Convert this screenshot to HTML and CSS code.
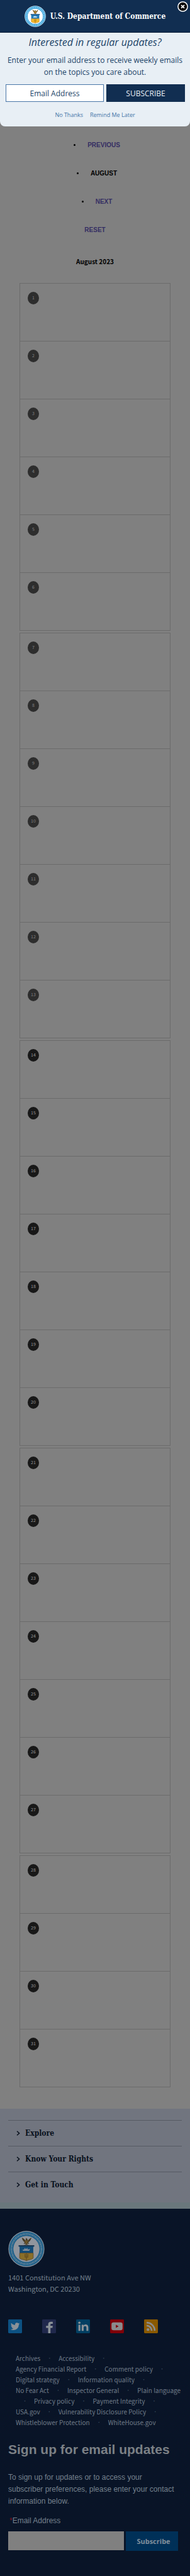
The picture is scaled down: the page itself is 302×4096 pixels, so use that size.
FILE: index.html
```html
<!DOCTYPE html>
<html lang="en">
<head>
<meta charset="utf-8">
<meta name="viewport" content="width=device-width, initial-scale=1">
<title>August 2023 | U.S. Department of Commerce</title>
<link rel="stylesheet" href="styles.css">
</head>
<body>
<svg class="defs" width="0" height="0" aria-hidden="true">
  <symbol id="seal" viewBox="0 0 80 80">
    <circle cx="40" cy="40" r="39.5" fill="#e6f4fb"/>
    <circle cx="40" cy="40" r="33" fill="none" stroke="#2f9fdc" stroke-width="9.5"/>
    <circle cx="40" cy="40" r="33" fill="none" stroke="#b5e0f5" stroke-width="4" stroke-dasharray="1.6 1.3 2.2 1.5"/>
    <circle cx="40" cy="40" r="28.4" fill="#fff"/>
    <path d="M30 15c1 5 3 8 6 10l-2 4 4-1v2l-4 1h12l-4-1v-2l4 1-2-4c4-2 6-6 7-10-4 2-6 4-8 7l-1-4-3-2-1 6c-2-4-5-6-8-7z" fill="#7a5a22"/>
    <path d="M36 24l4-4 4 4-4 6z" fill="#b98a2c"/>
    <path d="M23 32h34v3h-2v14H25V35h-2z" fill="#1b78b8"/>
    <path d="M23 32h34v2H23z" fill="#23405e"/>
    <path d="M31 42l4-1 1-3 3 2 3-2 1 3 5-1-2 4H33z" fill="#dceaf3"/>
    <path d="M25 49h30v11c-3 4-11 3-15 6-4-3-12-2-15-6z" fill="#f4b82a" stroke="#8a6a2a" stroke-width="1"/>
    <path d="M40 49v15M37 51v7h6v-7" fill="none" stroke="#a2731b" stroke-width="1.5"/>
  </symbol>
</svg>

<section class="signup" aria-label="Email signup">
  <header class="brand">
    <svg class="brand-seal"><use href="#seal"/></svg>
    <span class="brand-name">U.S. Department of Commerce</span>
    <button class="close" type="button" aria-label="Close">
      <svg viewBox="0 0 18 18"><circle cx="9" cy="9" r="8" fill="#000" stroke="#fff" stroke-width="1.6"/><path d="M6.4 6.4l5.2 5.2M11.6 6.4l-5.2 5.2" stroke="#fff" stroke-width="2"/></svg>
    </button>
  </header>
  <h2 class="signup-title">Interested in regular updates?</h2>
  <p class="signup-text">Enter your email address to receive weekly emails on the topics you care about.</p>
  <form class="signup-form">
    <input class="signup-input" type="email" aria-label="Email Address" placeholder="Email Address">
    <button class="signup-button" type="button">SUBSCRIBE</button>
  </form>
  <p class="signup-links"><a href="#">No Thanks</a><a href="#">Remind Me Later</a></p>
</section>

<main class="main">
  <ul class="pager">
    <li><a href="#">PREVIOUS</a></li>
    <li><strong>AUGUST</strong></li>
    <li><a href="#">NEXT</a></li>
  </ul>
  <p class="reset"><a href="#">RESET</a></p>
  <h1 class="month">August 2023</h1>
  <div class="calendar">
    <ol class="week past">
      <li><time>1</time></li><li><time>2</time></li><li><time>3</time></li><li><time>4</time></li><li><time>5</time></li><li><time>6</time></li>
    </ol>
    <ol class="week past">
      <li><time>7</time></li><li><time>8</time></li><li><time>9</time></li><li><time>10</time></li><li><time>11</time></li><li><time>12</time></li><li><time>13</time></li>
    </ol>
    <ol class="week">
      <li><time>14</time></li><li><time>15</time></li><li><time>16</time></li><li><time>17</time></li><li><time>18</time></li><li><time>19</time></li><li><time>20</time></li>
    </ol>
    <ol class="week">
      <li><time>21</time></li><li><time>22</time></li><li><time>23</time></li><li><time>24</time></li><li><time>25</time></li><li><time>26</time></li><li><time>27</time></li>
    </ol>
    <ol class="week">
      <li><time>28</time></li><li><time>29</time></li><li><time>30</time></li><li><time>31</time></li>
    </ol>
  </div>
</main>

<nav class="sections" aria-label="Sections">
  <button type="button"><svg viewBox="0 0 6 8"><path d="M1 .8L4.6 4 1 7.2"/></svg>Explore</button>
  <button type="button"><svg viewBox="0 0 6 8"><path d="M1 .8L4.6 4 1 7.2"/></svg>Know Your Rights</button>
  <button type="button"><svg viewBox="0 0 6 8"><path d="M1 .8L4.6 4 1 7.2"/></svg>Get in Touch</button>
</nav>

<footer class="footer">
  <svg class="footer-seal"><use href="#seal"/></svg>
  <address>1401 Constitution Ave NW<br>Washington, DC 20230</address>
  <div class="social">
    <a href="#" aria-label="Twitter"><svg viewBox="0 0 30 30"><rect width="30" height="30" rx="2" fill="#0d5283"/><path d="M25 9.2c-.8.3-1.500.5-2.300.6.8-.5 1.400-1.300 1.700-2.200-.8.500-1.600.8-2.500 1a4 4 0 0 0-6.900 3.700c-3.400-.2-6.300-1.800-8.300-4.300-1.100 1.900-.5 4.200 1.200 5.400-.6 0-1.200-.2-1.800-.5 0 2 1.400 3.600 3.200 4-.6.200-1.200.2-1.800.1.500 1.600 2 2.700 3.700 2.800A8 8 0 0 1 5 21.400c6.400 4 18.200.8 18-10.200.8-.5 1.500-1.200 2-2z" fill="#8b9298"/></svg></a>
    <a href="#" aria-label="Facebook"><svg viewBox="0 0 30 30"><rect width="30" height="30" rx="2" fill="#20284c"/><path d="M13 30V18.500H8.500V14H13v-3c0-4 2.400-6 6-6h4v4.500h-3c-1.600 0-2 .8-2 2V14h5l-.7 4.500H18V30z" fill="#8b9298"/></svg></a>
    <a href="#" aria-label="LinkedIn"><svg viewBox="0 0 30 30"><rect width="30" height="30" rx="2" fill="#023f62"/><path d="M5 11.500h4.200V25H5zM12 11.500h4v2c2.500-4 10.500-3.200 10.500 3.500v8h-4.200v-7.500c0-4-6-4-6 0V25H12z" fill="#8b9298"/><circle cx="7.100" cy="7.200" r="2.500" fill="#8b9298"/></svg></a>
    <a href="#" aria-label="YouTube"><svg viewBox="0 0 30 30"><rect width="30" height="30" rx="2" fill="#800008"/><rect x="3" y="6.500" width="24" height="17" rx="4.500" fill="#8b8b8b"/><path d="M12.500 11.500v7l6-3.500z" fill="#800008"/></svg></a>
    <a href="#" aria-label="RSS"><svg viewBox="0 0 30 30"><rect width="30" height="30" rx="2" fill="#8a5900"/><circle cx="8.500" cy="22" r="3" fill="#8b8b8b"/><path d="M5.500 13.500a11 11 0 0 1 11 11M5.500 7a17.500 17.500 0 0 1 17.500 17.500" fill="none" stroke="#8b8b8b" stroke-width="3.600"/></svg></a>
  </div>
  <nav class="links" aria-label="Footer">
    <p><a href="#">Archives</a><i>•</i><a href="#">Accessibility</a><i>•</i></p>
    <p><a href="#">Agency Financial Report</a><i>•</i><a href="#">Comment policy</a><i>•</i></p>
    <p><a href="#">Digital strategy</a><i>•</i><a href="#">Information quality</a><i>•</i></p>
    <p><a href="#">No Fear Act</a><i>•</i><a href="#">Inspector General</a><i>•</i><a href="#">Plain language</a></p>
    <p><i>•</i><a href="#">Privacy policy</a><i>•</i><a href="#">Payment Integrity</a><i>•</i></p>
    <p><a href="#">USA.gov</a><i>•</i><a href="#">Vulnerability Disclosure Policy</a><i>•</i></p>
    <p><a href="#">Whistleblower Protection</a><i>•</i><a href="#">WhiteHouse.gov</a></p>
  </nav>
  <h2 class="updates-title">Sign up for email updates</h2>
  <p class="updates-text">To sign up for updates or to access your subscriber preferences, please enter your contact information below.</p>
  <form class="updates-form">
    <label for="email"><span class="required">*</span>Email Address</label>
    <div class="updates-row">
      <input id="email" type="email">
      <button type="button">Subscribe</button>
    </div>
  </form>
</footer>
</body>
</html>
```
FILE: styles.css
```css
* { box-sizing: border-box; }
body, h1, h2, p, ul, ol { margin: 0; padding: 0; }
body {
  background: #808080;
  color: #000;
  font-family: "Noto Sans CJK SC", "Open Sans", sans-serif;
}
a { color: inherit; text-decoration: none; }
button, input { font: inherit; margin: 0; border: 0; border-radius: 0; }
svg { display: block; }
.defs { position: absolute; }

.signup {
  background: #e8eff5;
  border-radius: 0 0 8px 8px;
  color: #1c4468;
  font-family: "Open Sans", sans-serif;
  text-align: center;
  padding-bottom: 10px;
}
.brand {
  position: relative;
  display: flex;
  align-items: center;
  justify-content: center;
  gap: 7px;
  height: 52px;
  background: #112e51;
  border-bottom: 1px solid #0b1f38;
  color: #fff;
}
.brand-seal { width: 34px; height: 34px; }
.brand-name {
  font: bold 12px/20px "DejaVu Serif Condensed", "DejaVu Serif", serif;
}
.close {
  position: absolute;
  top: 2px;
  right: 3px;
  width: 17px;
  height: 17px;
  padding: 0;
  background: none;
}
.signup-title { padding-top: 4px; font-size: 16px; line-height: 22px; font-weight: 400; font-style: italic; }
.signup-text { padding: 8px 8px 0; font-size: 12px; line-height: 19px; }
.signup-form { display: flex; gap: 4px; padding: 10px 8px 0 9px; }
.signup-input {
  flex: 6;
  min-width: 0;
  height: 28px;
  border: 1px solid #4a77a8;
  background: #fff;
  font-size: 12px;
  text-align: center;
}
.signup-input::placeholder { color: #1c4468; opacity: 1; }
.signup-button { flex: 5; height: 28px; padding: 0; background: #112e51; color: #e8eff5; font-size: 12px; }
.signup-links { display: flex; justify-content: center; gap: 11px; padding-top: 13px; font-size: 9px; line-height: 16px; color: #4475a8; }

.main { padding: 7px 31px 34px; text-align: center; }
.pager, .reset { font: bold 10px/45px "Liberation Sans", sans-serif; }
.pager { list-style: disc inside; padding-left: 16px; }
.pager li { padding-right: 10px; }
.pager li > * { padding-left: 8px; }
.pager a, .reset a { color: #352e63; }
.month { padding: 16px 0 22px; font-size: 10px; line-height: 24px; font-weight: 700; }
.calendar { display: grid; gap: 3px; }
.week { list-style: none; border: 1px solid #6b6b6b; border-bottom: 0; text-align: left; }
.week li { height: 92px; padding: 13px 12px; border-bottom: 1px solid #6b6b6b; }
.week time {
  display: block;
  width: 18px;
  height: 20px;
  border-radius: 50%;
  background: #181818;
  color: #969696;
  font-size: 7px;
  line-height: 18px;
  text-align: center;
}
.past time { background: #2d2d2d; color: #808080; }

.sections { padding: 18px 13px 8px; background: #71757f; border-bottom: 10px solid #6a777c; }
.sections button {
  display: flex;
  align-items: center;
  gap: 8px;
  width: 100%;
  height: 41px;
  padding: 0 13px;
  background: none;
  border-top: 1px solid #565a63;
  color: #08101c;
  font: bold 12px/20px "DejaVu Serif Condensed", "DejaVu Serif", serif;
}
.sections svg { width: 6px; height: 8px; fill: none; stroke: #08101c; stroke-width: 1.500; }

.footer { padding: 35px 13px 40px; background: #091427; color: #74808c; }
.footer-seal { width: 58px; height: 58px; opacity: .55; }
address { padding: 7px 0 40px; font-size: 11px; line-height: 18px; font-style: normal; }
.social { display: flex; gap: 32px; }
.social svg { width: 22px; height: 22px; }
.links { padding: 31px 0 22px 12px; font-size: 10px; line-height: 17px; color: #6f7b88; white-space: nowrap; }
.links p { display: flex; }
.links i { width: 29px; text-align: center; font-style: normal; font-size: 7px; color: #3d4c5e; }
.updates-title { font: bold 21px/26px "Liberation Sans", sans-serif; color: #7b8085; }
.updates-text { padding: 22px 8px 12px 0; font: 12px/19px "Liberation Sans", sans-serif; }
.updates-form { font: 12px/18px "Liberation Sans", sans-serif; }
.updates-form label { display: block; padding-left: 2px; }
.required { color: #7a1420; }
.updates-row { display: flex; gap: 3px; padding: 8px 6px 0 0; }
.updates-row input { flex: 1; min-width: 0; height: 30px; background: #808080; }
.updates-row button { width: 83px; height: 31px; padding: 0 0 0 5px; background: #003058; color: #808f9c; font: bold 11px "Open Sans", sans-serif; }
```
